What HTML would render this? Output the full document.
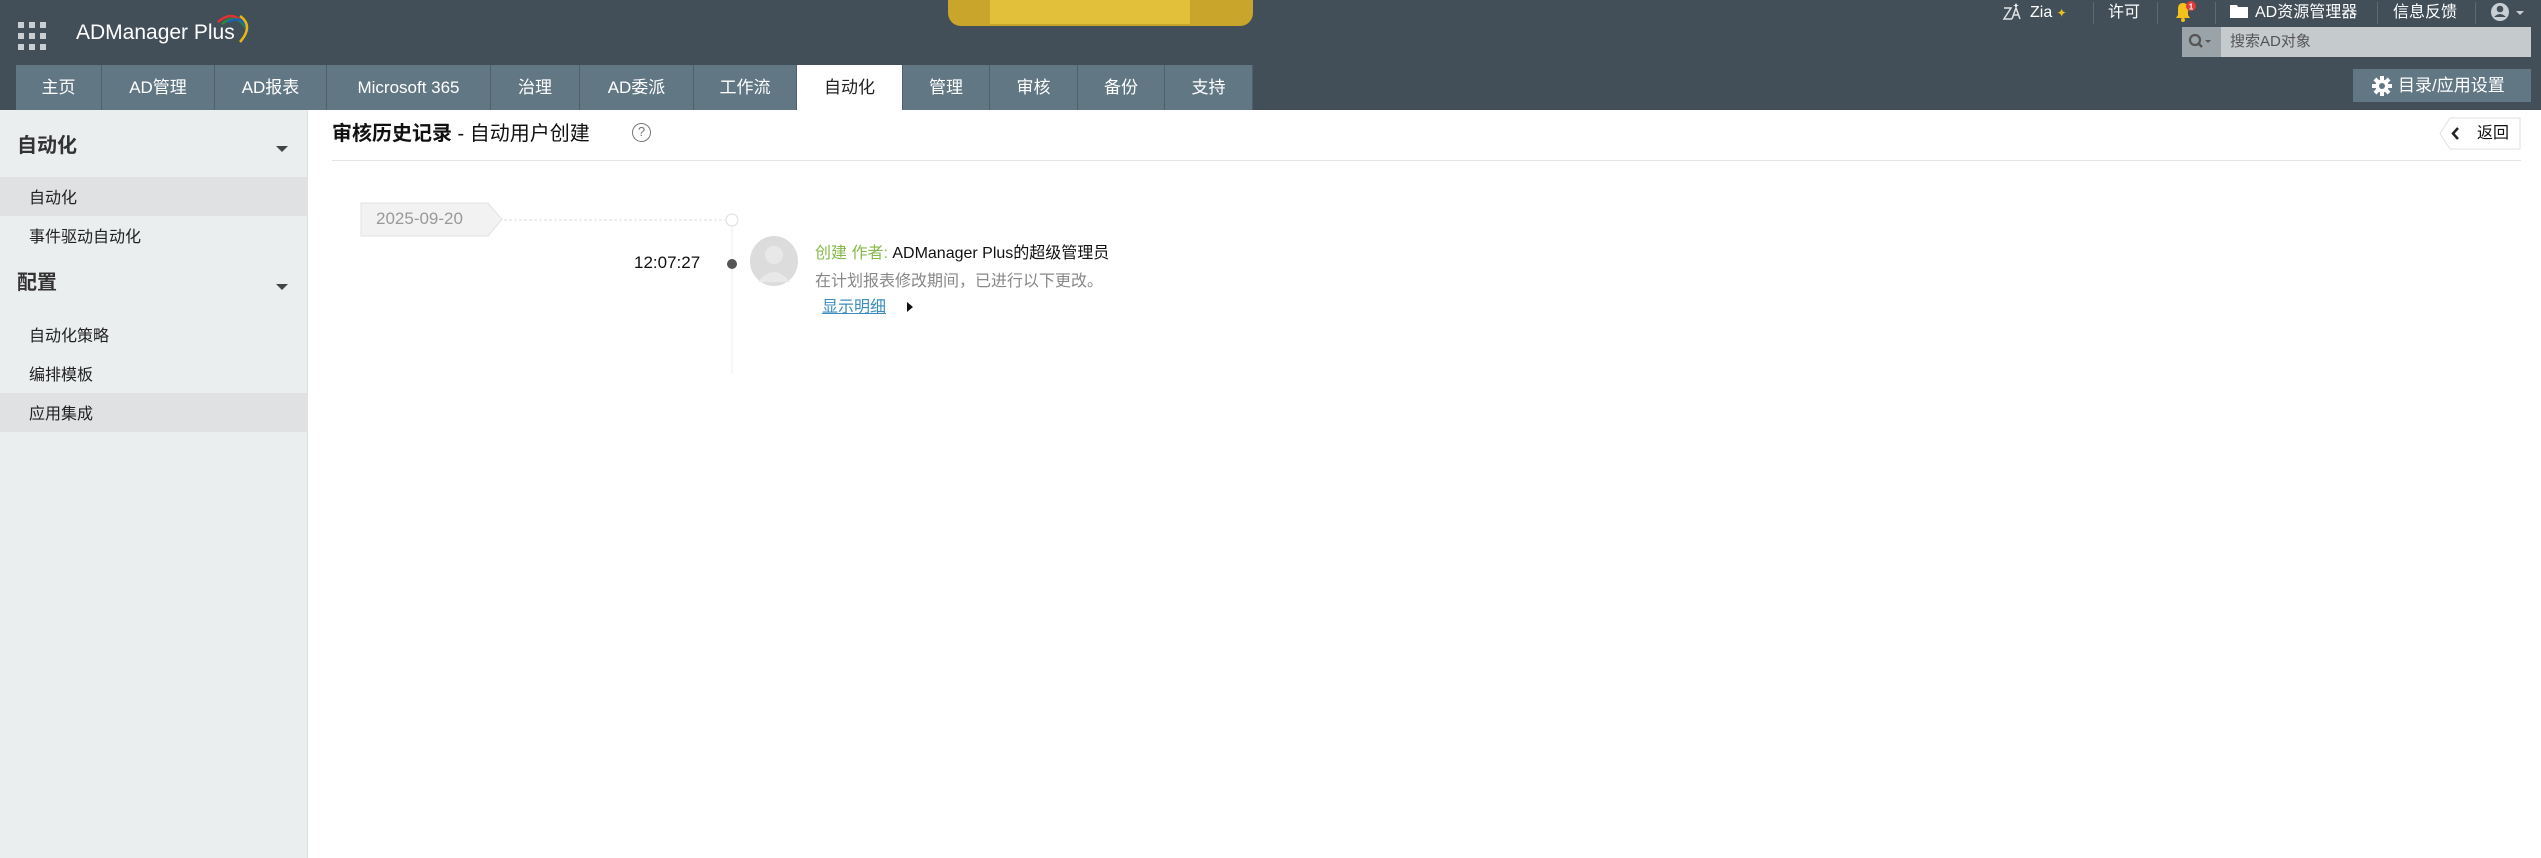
<!DOCTYPE html>
<html><head><meta charset="utf-8"><style>
*{margin:0;padding:0;box-sizing:border-box}
body{width:2541px;height:858px;position:relative;background:#fff;font-family:"Liberation Sans","Noto Sans CJK SC",sans-serif;overflow:hidden;line-height:1.2}
.a{position:absolute;white-space:nowrap;line-height:1.2}
#hdr{position:absolute;left:0;top:0;width:2541px;height:110px;background:#424f58}
.tab{position:absolute;top:65px;height:45px;background:#627784;color:#fff;font-size:17px;line-height:45px;text-align:center;border-right:1px solid #4f606b}
.tab.on{background:#fff;color:#222}
.sep{position:absolute;top:2px;width:1px;height:22px;background:#5c6a73}
.tr{color:#fff;font-size:16px;top:3px}
#side{position:absolute;left:0;top:110px;width:308px;height:748px;background:#ebeeef;border-right:1px solid #dcdfe1}
.si{position:absolute;left:29px;font-size:16px;color:#222;line-height:1.2}
.sh{position:absolute;left:17px;font-size:20px;font-weight:bold;color:#333;line-height:1.2}
.car{position:absolute;left:276px;width:0;height:0;border-left:6px solid transparent;border-right:6px solid transparent;border-top:6px solid #444}
</style></head><body>
<div id="hdr"></div>
<svg class="a" style="left:18px;top:22px" width="28" height="28"><g fill="#c8ced2"><rect x="0" y="0" width="6" height="6"/><rect x="11" y="0" width="6" height="6"/><rect x="22" y="0" width="6" height="6"/><rect x="0" y="11" width="6" height="6"/><rect x="11" y="11" width="6" height="6"/><rect x="22" y="11" width="6" height="6"/><rect x="0" y="22" width="6" height="6"/><rect x="11" y="22" width="6" height="6"/><rect x="22" y="22" width="6" height="6"/></g></svg>
<div class="a" style="left:76px;top:20px;color:#fff;font-size:21px">ADManager Plus</div>
<svg class="a" style="left:214px;top:8px" width="40" height="36"><path d="M4 14 Q18 2 28 14" stroke="#d33" stroke-width="2.5" fill="none"/><path d="M8 16 Q22 4 32 20" stroke="#2a8a3c" stroke-width="2.5" fill="none"/><path d="M14 14 Q30 6 34 24" stroke="#1f5fb5" stroke-width="2.5" fill="none"/><path d="M26 8 Q40 18 26 34" stroke="#e9b80f" stroke-width="2.5" fill="none"/></svg>
<div class="a" style="left:948px;top:0;width:305px;height:26px;background:#c9a52c;border-radius:0 0 13px 13px"></div>
<div class="a" style="left:990px;top:0;width:200px;height:24px;background:#e2c03a"></div>

<div class="tab" style="left:16px;width:86px">主页</div>
<div class="tab" style="left:102px;width:113px">AD管理</div>
<div class="tab" style="left:215px;width:112px">AD报表</div>
<div class="tab" style="left:327px;width:164px">Microsoft 365</div>
<div class="tab" style="left:491px;width:89px">治理</div>
<div class="tab" style="left:580px;width:114px">AD委派</div>
<div class="tab" style="left:694px;width:103px">工作流</div>
<div class="tab on" style="left:797px;width:106px">自动化</div>
<div class="tab" style="left:903px;width:87px">管理</div>
<div class="tab" style="left:990px;width:88px">审核</div>
<div class="tab" style="left:1078px;width:87px">备份</div>
<div class="tab" style="left:1165px;width:88px">支持</div>

<svg class="a" style="left:2002px;top:2px" width="22" height="20"><path d="M2 6 H9 L2 17 H10 M10 17 L14 6 L18 17 M12 13 H17" stroke="#dfe3e6" stroke-width="1.5" fill="none"/><path d="M14 1 L15 3 L17 3.5 L15 4 L14 6 L13 4 L11 3.5 L13 3 Z" fill="#fff"/></svg>
<div class="a tr" style="left:2030px">Zia <span style="color:#e9c21a;font-size:12px">✦</span></div>
<div class="sep" style="left:2093px"></div>
<div class="a tr" style="left:2108px">许可</div>
<div class="sep" style="left:2157px"></div>
<svg class="a" style="left:2172px;top:1px" width="26" height="22"><path d="M4 17 L6 14 L6 8 Q6 2 11 2 Q16 2 16 8 L16 14 L18 17 Z" fill="#f0c21b"/><circle cx="11" cy="19" r="2" fill="#f0c21b"/><circle cx="19" cy="5" r="5" fill="#e03a3a"/><text x="19" y="8.5" font-size="8" fill="#fff" text-anchor="middle" font-family="Liberation Sans" font-weight="bold">1</text></svg>
<div class="sep" style="left:2215px"></div>
<svg class="a" style="left:2230px;top:5px" width="18" height="13"><path d="M0 0 H7 L8 2 H18 V13 H0 Z" fill="#fff"/></svg>
<div class="a tr" style="left:2255px">AD资源管理器</div>
<div class="sep" style="left:2377px"></div>
<div class="a tr" style="left:2393px">信息反馈</div>
<div class="sep" style="left:2475px"></div>
<svg class="a" style="left:2490px;top:2px" width="40" height="20"><circle cx="10" cy="10" r="9" fill="#c8ced2"/><circle cx="10" cy="7" r="3.3" fill="#424f58"/><path d="M4 15 Q10 9 16 15" fill="#424f58"/><path d="M26 9 L34 9 L30 13 Z" fill="#c8ced2"/></svg>

<div class="a" style="left:2182px;top:27px;width:39px;height:30px;background:#9aa3a8"></div>
<svg class="a" style="left:2188px;top:33px" width="28" height="18"><circle cx="7" cy="7" r="5" stroke="#555" stroke-width="2.2" fill="none"/><path d="M10.5 10.5 L14 14" stroke="#555" stroke-width="2.5"/><path d="M17 7 L23 7 L20 10 Z" fill="#555"/></svg>
<div class="a" style="left:2221px;top:27px;width:310px;height:30px;background:#c5cacd;color:#555;font-size:15px;line-height:30px;padding-left:9px">搜索AD对象</div>
<div class="a" style="left:2353px;top:69px;width:178px;height:33px;background:#627784;color:#fff;font-size:17px;line-height:33px;padding-left:45px">目录/应用设置</div>
<svg class="a" style="left:2372px;top:76px" width="20" height="20" viewBox="0 0 20 20"><g fill="#fff"><circle cx="10" cy="10" r="6.5"/><rect x="8" y="0" width="4" height="20"/><rect x="0" y="8" width="20" height="4"/><rect x="8" y="0" width="4" height="20" transform="rotate(45 10 10)"/><rect x="8" y="0" width="4" height="20" transform="rotate(-45 10 10)"/></g><circle cx="10" cy="10" r="3" fill="#627784"/></svg>

<div id="side">
<div class="sh" style="top:24px">自动化</div><div class="car" style="top:36px"></div>
<div class="a" style="left:0;top:67px;width:308px;height:39px;background:#dfe1e3"></div>
<div class="si" style="top:79px">自动化</div>
<div class="si" style="top:118px">事件驱动自动化</div>
<div class="sh" style="top:161px">配置</div><div class="car" style="top:174px"></div>
<div class="si" style="top:217px">自动化策略</div>
<div class="si" style="top:256px">编排模板</div>
<div class="a" style="left:0;top:283px;width:308px;height:39px;background:#dfe1e3"></div>
<div class="si" style="top:295px">应用集成</div>
</div>

<div class="a" style="left:332px;top:122px;font-size:20px;color:#111"><b>审核历史记录</b> - 自动用户创建</div>
<div class="a" style="left:632px;top:123px;width:19px;height:19px;border:1.5px solid #777;border-radius:50%;font-size:13px;line-height:16px;text-align:center;color:#777">?</div>
<div class="a" style="left:332px;top:160px;width:2189px;height:1px;background:#e2e4e6"></div>
<svg class="a" style="left:2438px;top:117px" width="83" height="33"><path d="M12 1 H82 V32 H12 L2 16.5 Z" fill="#fff" stroke="#dfe1e3"/><path d="M20 11 L15 16.5 L20 22" stroke="#222" stroke-width="2.5" fill="none"/></svg>
<div class="a" style="left:2477px;top:124px;font-size:16px;color:#111">返回</div>

<svg class="a" style="left:360px;top:202px" width="390" height="175"><path d="M1 1 H128 L142 17.5 L128 34 H1 Z" fill="#f2f2f2" stroke="#e2e2e2"/><path d="M144 18 H365" stroke="#ddd" stroke-dasharray="3 2"/><circle cx="372" cy="18" r="6" fill="#fff" stroke="#ddd"/><path d="M372 24 V172" stroke="#eee"/><circle cx="372" cy="62" r="5" fill="#555"/></svg>
<div class="a" style="left:376px;top:209px;font-size:17px;color:#999">2025-09-20</div>
<div class="a" style="left:634px;top:253px;font-size:17px;color:#111">12:07:27</div>
<svg class="a" style="left:749px;top:236px" width="50" height="51"><ellipse cx="25" cy="25" rx="24" ry="25" fill="#dcdcdc"/><circle cx="25" cy="19" r="9" fill="#e8e8e8"/><path d="M9 46 Q25 26 41 46" fill="#e8e8e8"/></svg>
<div class="a" style="left:815px;top:244px;font-size:16px;color:#111"><span style="color:#86b94a">创建 作者:</span> ADManager Plus的超级管理员</div>
<div class="a" style="left:815px;top:272px;font-size:16px;color:#888">在计划报表修改期间，已进行以下更改。</div>
<div class="a" style="left:822px;top:298px;font-size:16px;color:#3b8dbd;text-decoration:underline">显示明细 </div>
<svg class="a" style="left:906px;top:301px" width="8" height="12"><path d="M1 1 L7 6 L1 11 Z" fill="#111"/></svg>
</body></html>
